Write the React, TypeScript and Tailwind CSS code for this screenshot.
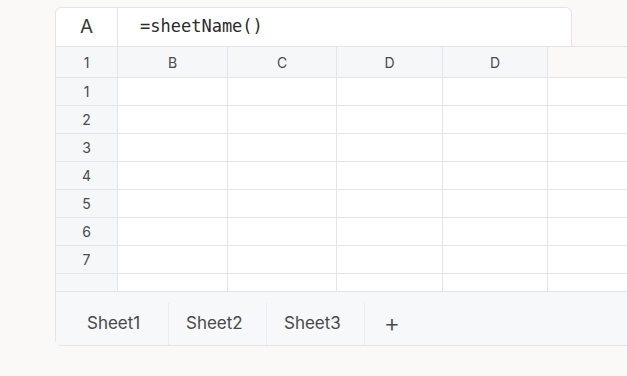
const COLS = [
  { label: 'B', w: 'w-[110px]' },
  { label: 'C', w: 'w-[109px]' },
  { label: 'D', w: 'w-[106px]' },
  { label: 'D', w: 'w-[105px]' },
];

const ROWS = ['1', '2', '3', '4', '5', '6', '7'];
const TABS = ['Sheet1', 'Sheet2', 'Sheet3'];

const sans = { fontFamily: 'Inter, "Noto Sans", sans-serif' };

export default function App() {
  return (
    <div className="h-[376px] w-[627px] overflow-hidden bg-[#faf9f7] pl-[55px] pt-[7px]" style={sans}>
      {/* Formula bar */}
      <div className="flex h-[39px] w-[517px] rounded-t-[6px] border border-b-0 border-[#e4e5e9] bg-white">
        <div className="flex w-[62px] items-center justify-center border-r border-[#e4e5e9] text-[19px] text-[#3a3a3c]">A</div>
        <div
          className="flex items-center pl-[22px] text-[17px] text-[#2b2b2d]"
          style={{ fontFamily: '"DejaVu Sans Mono", "Liberation Mono", monospace' }}
        >
          =sheetName()
        </div>
      </div>

      {/* Grid */}
      <div className="rounded-bl-[6px] border-b border-l border-[#e4e5e9]">
        <div className="flex h-[31px] border-t border-[#e4e5e9] text-[14px] text-[#4a4a4e]">
          <div className="flex w-[62px] shrink-0 items-center justify-center border-r border-[#e4e5e9] bg-[#f6f7f9]">1</div>
          {COLS.map((c, i) => (
            <div key={i} className={`flex ${c.w} shrink-0 items-center justify-center border-r border-[#e4e5e9] bg-[#f6f7f9]`}>
              {c.label}
            </div>
          ))}
          <div className="flex-1" />
        </div>
        {ROWS.map(r => (
          <div key={r} className="flex h-[28px] border-t border-[#e4e5e9] text-[14px] text-[#4a4a4e]">
            <div className="flex w-[62px] shrink-0 items-center justify-center border-r border-[#e4e5e9] bg-[#f6f7f9]">{r}</div>
            {COLS.map((c, i) => (
              <div key={i} className={`${c.w} shrink-0 border-r border-[#e4e5e9] bg-white`} />
            ))}
            <div className="flex-1 bg-white" />
          </div>
        ))}
        <div className="flex h-[18px] border-t border-[#e4e5e9]">
          <div className="w-[62px] shrink-0 border-r border-[#e4e5e9] bg-[#f6f7f9]" />
          {COLS.map((c, i) => (
            <div key={i} className={`${c.w} shrink-0 border-r border-[#e4e5e9] bg-white`} />
          ))}
          <div className="flex-1 bg-white" />
        </div>

        {/* Sheet tabs */}
        <div className="flex h-[54px] items-end border-t border-[#e4e5e9] bg-[#f7f8fa] text-[17px] text-[#48484c]">
          {TABS.map((t, i) => (
            <div
              key={t}
              className={`flex h-[42px] items-center border-r border-[#ebecef] ${
                i === 0 ? 'w-[113px] pl-[31px]' : 'w-[98px] pl-[17px]'
              }`}
            >
              {t}
            </div>
          ))}
          <div className="flex h-[42px] w-[54px] items-center justify-center text-[25px] font-light text-[#48484c]">
            +
          </div>
        </div>
      </div>
    </div>
  );
}
